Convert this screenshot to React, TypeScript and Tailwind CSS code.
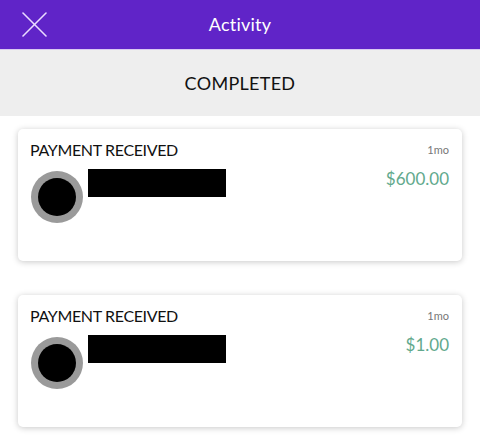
import React from "react";

type Item = { title: string; when: string; amount: string };

const items: Item[] = [
  { title: "PAYMENT RECEIVED", when: "1mo", amount: "$600.00" },
  { title: "PAYMENT RECEIVED", when: "1mo", amount: "$1.00" },
];

function ActivityCard({ item }: { item: Item }) {
  return (
    <div className="mx-[18px] h-[132px] rounded-[5px] bg-white shadow-[0_1px_6px_rgba(0,0,0,0.22)] pl-3 pr-[13px] pt-[11px]">
      <div className="flex items-start justify-between">
        <span className="text-[16px] leading-[20px] text-[#111] tracking-[-0.35px]">{item.title}</span>
        <span className="text-[11px] leading-[14px] mt-[3px] text-[#777]">{item.when}</span>
      </div>
      <div className="flex items-start mt-[2px]">
        <div className="mt-[9px] h-[52px] w-[52px] rounded-full bg-[#9a9a9a] flex items-center justify-center shrink-0 ml-px">
          <div className="h-[38px] w-[38px] rounded-full bg-black" />
        </div>
        <div className="ml-[5px] mt-[7px] h-[28px] w-[138px] bg-black" />
        <span className="ml-auto mt-[7px] text-[17px] leading-[20px] text-[#62a98d]">
          {item.amount}
        </span>
      </div>
    </div>
  );
}

export default function App() {
  return (
    <div className="w-[480px] h-[443px] overflow-hidden bg-white font-['Lato','Noto_Sans',sans-serif]">
      <header className="relative h-[49px] bg-[#6024c8] flex items-center justify-center">
        <svg
          className="absolute left-[22px] top-[12px]"
          width="25"
          height="25"
          viewBox="0 0 25 25"
          fill="none"
          stroke="#e9dcff"
          strokeWidth="1.6"
          strokeLinecap="round"
        >
          <line x1="1" y1="1" x2="24" y2="24" />
          <line x1="24" y1="1" x2="1" y2="24" />
        </svg>
        <h1 className="text-[18px] text-white tracking-[0.2px]">Activity</h1>
      </header>
      <div className="h-px bg-[#d9c9f1]" />
      <div className="h-[66px] bg-[#eeeeee] flex items-center justify-center">
        <span className="text-[18px] text-[#111] tracking-[0.3px]">COMPLETED</span>
      </div>
      <div className="flex flex-col gap-[34px] pt-[13px]">
        {items.map((it, i) => (
          <ActivityCard key={i} item={it} />
        ))}
      </div>
    </div>
  );
}
